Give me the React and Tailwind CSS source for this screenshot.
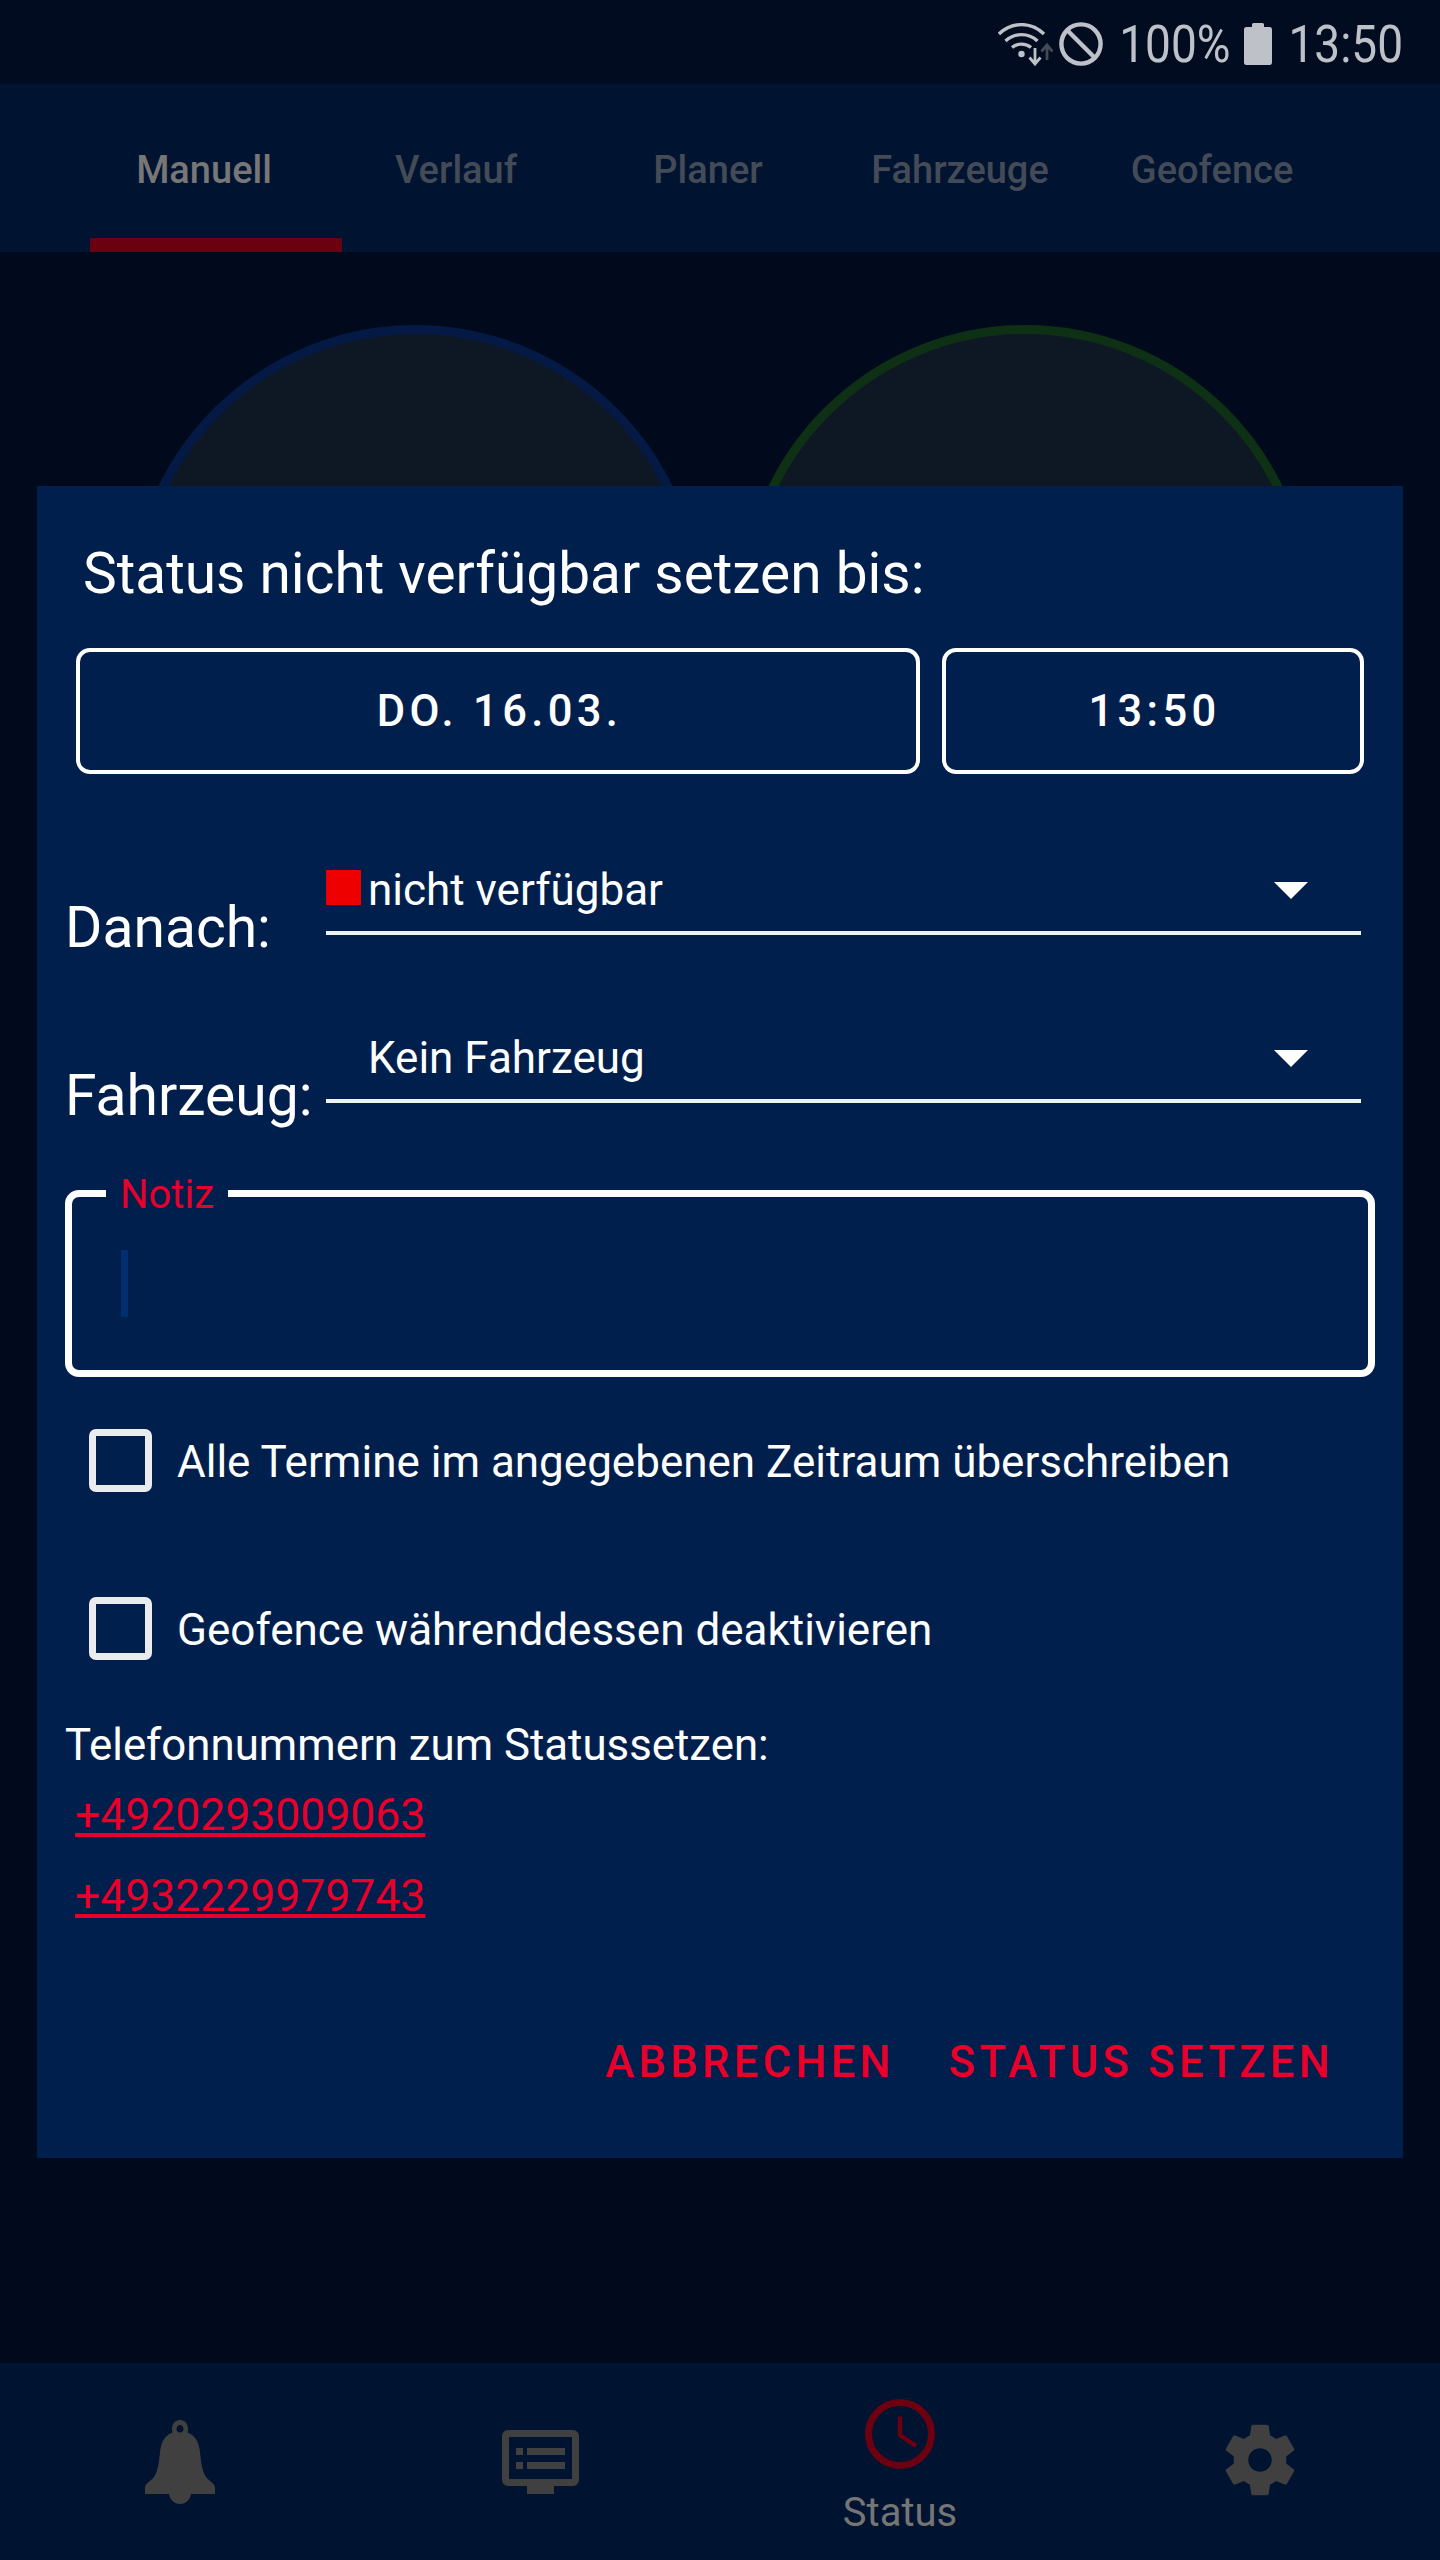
const font = { fontFamily: '"Roboto", "Liberation Sans", sans-serif' };

const WifiIcon = () => (
  <svg width="55" height="43" viewBox="0 0 55 43" fill="none">
    <path d="M1 11C14 -1.5 33 -1.5 46 11" stroke="#bec2c8" strokeWidth="3.4" />
    <path d="M7.5 18C16.5 9.5 30.5 9.5 39.5 18" stroke="#bec2c8" strokeWidth="3.4" />
    <path d="M14 24.5C19.5 20 27.5 20 33 24.5" stroke="#bec2c8" strokeWidth="3.4" />
    <circle cx="23.5" cy="31" r="3.2" fill="#bec2c8" />
    <path d="M37 25V39M31.5 34.5L37 41L42.5 34.5" stroke="#bec2c8" strokeWidth="2.8" />
    <path d="M49 37V24M43.5 28.5L49 22L54.5 28.5" stroke="#444b57" strokeWidth="2.8" />
  </svg>
);

const BlockIcon = () => (
  <svg width="44" height="44" viewBox="0 0 44 44" fill="none" stroke="#bec2c8" strokeWidth="4.4">
    <circle cx="22" cy="22" r="19.6" />
    <path d="M8 8L36 36" />
  </svg>
);

const BatteryIcon = () => (
  <svg width="28" height="42" viewBox="0 0 28 42" fill="#bec2c8">
    <path d="M8 1.5a1.5 1.5 0 0 1 1.5-1.5h9a1.5 1.5 0 0 1 1.5 1.5V4h5.5A2.5 2.5 0 0 1 28 6.500V39.500a2.500 2.500 0 0 1-2.500 2.500H2.500A2.500 2.500 0 0 1 0 39.500V6.500A2.500 2.500 0 0 1 2.500 4H8z" />
  </svg>
);

const BellIcon = () => (
  <svg width="70" height="84" viewBox="0 0 70 84" fill="#404040">
    <path fillRule="evenodd" d="M35 0c5 0 8 4 8 9 0 1.500-.2 2.500-.5 3.500C50 15 54 22 55 32c1 10 2 19 6 25 3 4 9 6 9 11v6H0v-6c0-5 6-7 9-11 4-6 5-15 6-25 1-10 5-17 12.500-19.500-.3-1-.5-2-.5-3.500 0-5 3-9 8-9zm0 5c-2 0-3.500 2-3.500 4s1.500 3.500 3.500 3.500 3.500-1.500 3.500-3.500S37 5 35 5z" />
    <path d="M24 73h22c0 6-5 11-11 11s-11-5-11-11z" />
  </svg>
);

const MonitorIcon = () => (
  <svg width="77" height="64" viewBox="0 0 77 64" fill="#404040">
    <path fillRule="evenodd" d="M6 0h65a6 6 0 0 1 6 6v44a6 6 0 0 1-6 6H52v8H25v-8H6a6 6 0 0 1-6-6V6a6 6 0 0 1 6-6zm1 7v42h63V7z" />
    <rect x="14" y="18" width="7" height="7" />
    <rect x="25" y="18" width="38" height="7" />
    <rect x="14" y="32" width="7" height="7" />
    <rect x="25" y="32" width="38" height="7" />
  </svg>
);

const ClockIcon = () => (
  <svg width="70" height="70" viewBox="0 0 70 70" fill="none" stroke="#6d0010">
    <circle cx="35" cy="35" r="31.500" strokeWidth="7" />
    <path d="M35 17.500V36L51 47" strokeWidth="4.500" />
  </svg>
);

const GearIcon = () => (
  <svg width="88" height="88" viewBox="0 0 24 24" fill="#404040">
    <path d="M19.140 12.940c.04-.3.06-.61.06-.94 0-.32-.02-.64-.07-.94l2.030-1.580a.49.49 0 0 0 .12-.61l-1.920-3.320a.488.488 0 0 0-.59-.22l-2.390.96c-.5-.38-1.030-.7-1.620-.94l-.36-2.540a.484.484 0 0 0-.48-.41h-3.840c-.24 0-.43.17-.47.41l-.36 2.540c-.59.24-1.130.57-1.620.94l-2.390-.96c-.22-.08-.47 0-.59.22L2.740 8.870c-.12.21-.08.47.12.61l2.030 1.580c-.05.3-.09.63-.09.94s.02.64.07.94l-2.030 1.580a.49.49 0 0 0-.12.61l1.920 3.320c.12.22.37.29.59.22l2.390-.96c.5.38 1.030.7 1.620.94l.36 2.540c.05.24.24.41.48.41h3.840c.24 0 .44-.17.47-.41l.36-2.540c.59-.24 1.130-.56 1.620-.94l2.390.96c.22.08.47 0 .59-.22l1.920-3.320c.12-.22.07-.47-.12-.61l-2.010-1.580zM12 15.200c-1.770 0-3.200-1.430-3.200-3.200s1.430-3.200 3.200-3.200 3.200 1.430 3.200 3.200-1.430 3.200-3.200 3.200z" />
  </svg>
);

const Select = ({ children }) => (
  <div className="flex h-[75px] w-[1035px] items-start border-b-4 border-[#eef1f5]">
    {children}
    <div className="mt-[22px] ml-auto mr-[53px] h-0 w-0 border-x-[17px] border-t-[17px] border-x-transparent border-t-white" />
  </div>
);

const Checkbox = ({ label, className }) => (
  <div className={`flex h-[63px] items-center gap-[25px] ml-[52px] ${className}`}>
    <div className="h-[63px] w-[63px] rounded-[7px] border-[7px] border-[#e9ebef]" />
    <span className="pt-[4px] text-[44px] leading-[63px] text-white">{label}</span>
  </div>
);

export default function App() {
  return (
    <div className="relative flex h-[2560px] w-[1440px] flex-col overflow-hidden bg-[#000a1c]" style={font}>
      <div className="flex h-[84px] items-center justify-end bg-[#010c21] pr-[37px] pt-[4px] text-[#bec2c8]">
        <WifiIcon />
        <div className="ml-[6px]"><BlockIcon /></div>
        <span className="ml-[16px] scale-y-[1.14] text-[46px] leading-[60px]">100%</span>
        <div className="ml-[14px]"><BatteryIcon /></div>
        <span className="ml-[16px] scale-y-[1.14] text-[46px] leading-[60px]">13:50</span>
      </div>

      <div className="flex h-[168px] flex-col bg-[#001330]">
        <div className="flex flex-1 pl-[78px] pt-[66px] text-[38px] font-medium leading-[40px] text-[#444b57]">
          <div className="w-[252px] text-center text-[#777777]">Manuell</div>
          <div className="w-[252px] text-center">Verlauf</div>
          <div className="w-[252px] text-center">Planer</div>
          <div className="w-[252px] text-center">Fahrzeuge</div>
          <div className="w-[252px] text-center">Geofence</div>
        </div>
        <div className="ml-[90px] h-[14px] w-[252px] bg-[#6a0010]" />
      </div>

      <div className="flex flex-1 justify-center gap-[39px] pt-[73px]">
        <div className="h-[571px] w-[571px] rounded-full border-[9px] border-[#041a45] bg-[#0e1825]" />
        <div className="h-[571px] w-[571px] rounded-full border-[9px] border-[#0e3014] bg-[#0e1825]" />
      </div>

      <div className="flex h-[197px] items-start bg-[#001330]">
        <div className="flex w-[360px] justify-center pt-[57px]"><BellIcon /></div>
        <div className="flex w-[360px] justify-center pt-[67px]"><MonitorIcon /></div>
        <div className="flex w-[360px] flex-col items-center pt-[36px]">
          <ClockIcon />
          <span className="mt-[22px] text-[40px] leading-[44px] text-[#757575]">Status</span>
        </div>
        <div className="flex w-[360px] justify-center pt-[53px]"><GearIcon /></div>
      </div>

      <div className="absolute left-[37px] top-[486px] flex h-[1672px] w-[1366px] flex-col bg-[#001f4d] text-white">
        <h2 className="ml-[46px] mt-[56px] text-[56.8px] leading-[64px]">Status nicht verfügbar setzen bis:</h2>

        <div className="mx-[39px] mt-[42px] flex h-[126px] gap-[22px] text-[43.5px] font-medium tracking-[0.1em]">
          <button className="w-[844px] rounded-[14px] border-4 border-white pl-[3px] pt-[2px]">DO. 16.03.</button>
          <button className="w-[422px] rounded-[14px] border-4 border-white pl-[3px] pt-[2px]">13:50</button>
        </div>

        <div className="ml-[28px] mt-[86px] flex h-[168px] items-start">
          <span className="mt-[34px] w-[261px] text-[57px] leading-[68px]">Danach:</span>
          <Select>
            <div className="mt-[10px] h-[35px] w-[35px] bg-[#ee0000]" />
            <span className="ml-[7px] text-[44px] leading-[60px]">nicht verfügbar</span>
          </Select>
        </div>
        <div className="ml-[28px] flex h-[162px] items-start">
          <span className="mt-[34px] w-[261px] text-[57px] leading-[68px]">Fahrzeug:</span>
          <Select>
            <span className="ml-[42px] text-[44px] leading-[60px]">Kein Fahrzeug</span>
          </Select>
        </div>

        <div className="relative mx-[28px] h-[187px] rounded-[14px] border-[7px] border-white pl-[49px] pt-[53px]">
          <span className="absolute left-[34px] top-[-22px] bg-[#001f4d] px-[14px] text-[40px] leading-[40px] text-[#e8002a]">Notiz</span>
          <div className="h-[67px] w-[7px] bg-[#002f6e]" />
        </div>

        <Checkbox className="mt-[52px]" label="Alle Termine im angegebenen Zeitraum überschreiben" />
        <Checkbox className="mt-[105px]" label="Geofence währenddessen deaktivieren" />

        <p className="ml-[28px] mt-[55px] text-[43.8px] leading-[60px]">Telefonnummern zum Statussetzen:</p>
        <a className="ml-[38px] mt-[10px] w-fit text-[44.5px] leading-[60px] text-[#e8002a] underline">+4920293009063</a>
        <a className="ml-[38px] mt-[21px] w-fit text-[44.5px] leading-[60px] text-[#e8002a] underline">+4932229979743</a>

        <div className="mr-[69px] mt-[107px] flex justify-end gap-[54px] text-[43.5px] font-medium leading-[60px] tracking-[0.1em] text-[#e8002a]">
          <button>ABBRECHEN</button>
          <button>STATUS SETZEN</button>
        </div>
      </div>
    </div>
  );
}
